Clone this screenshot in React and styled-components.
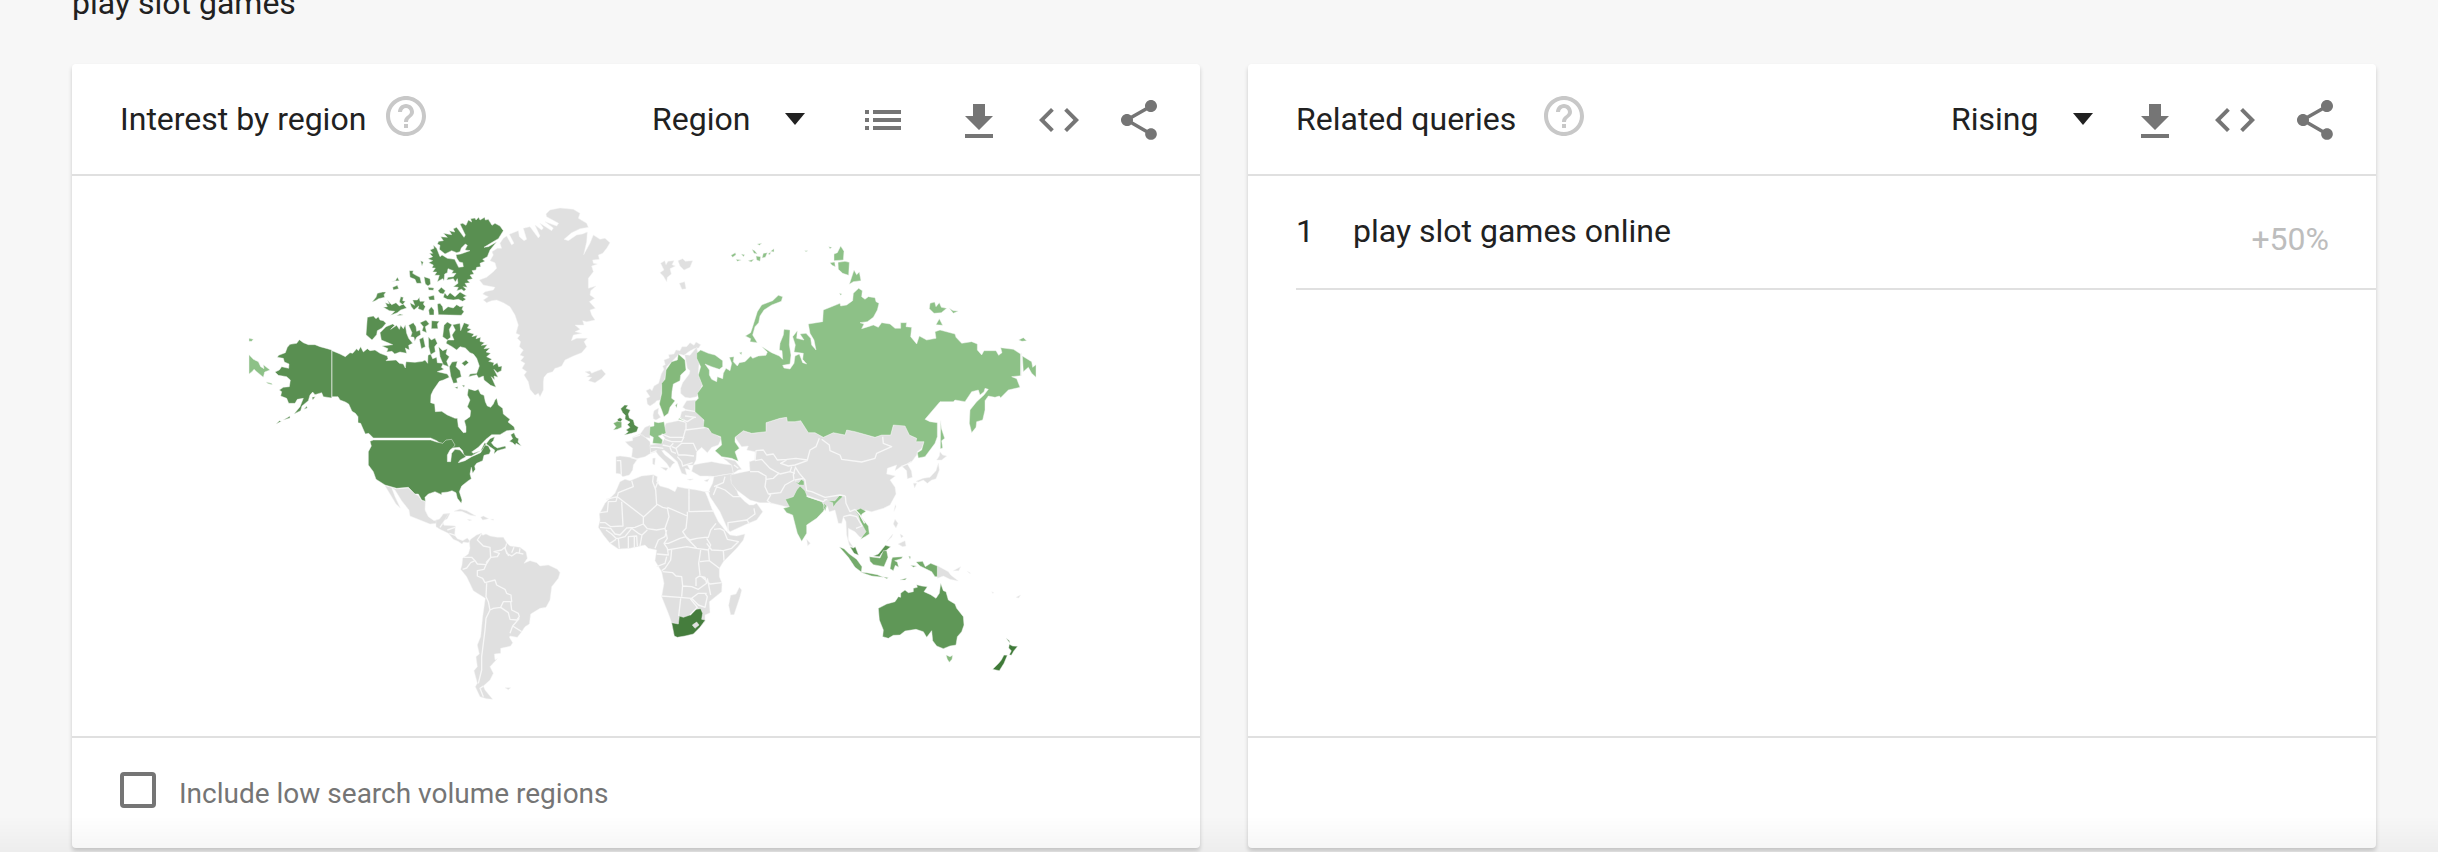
import React from "react";
import styled, { createGlobalStyle } from "styled-components";

const GlobalStyle = createGlobalStyle`
  *, *::before, *::after { box-sizing: border-box; }
  body {
    margin: 0;
    background: #f7f7f7;
    color: #212121;
    font-family: Roboto, "Liberation Sans", sans-serif;
    font-size: 32px;
    line-height: 38px;
    overflow: hidden;
  }
`;

const Page = styled.main`
  margin-top: -16px;
  padding: 0 62px 4px 72px;
`;

const Term = styled.p`
  margin: 0 0 42px;
`;

const Cards = styled.div`
  display: grid;
  grid-template-columns: 1fr 1fr;
  gap: 48px;
`;

const Card = styled.section`
  display: flex;
  flex-direction: column;
  min-width: 0;
  background: #fff;
  border-radius: 4px;
  box-shadow: 0 3px 4px rgba(0, 0, 0, 0.18);
`;

const CardHeader = styled.header`
  display: flex;
  align-items: center;
  min-height: 112px;
  padding: 0 37px 0 48px;
  border-bottom: 2px solid #e0e0e0;
`;

const Title = styled.h2`
  margin: 0;
  font-size: 32px;
  font-weight: 400;
  line-height: 38px;
`;

const Actions = styled.div`
  display: flex;
  align-items: center;
  gap: 32px;
  margin-left: auto;
`;

const IconButton = styled.button`
  display: block;
  width: 48px;
  height: 48px;
  padding: 0;
  margin: ${(p) => p.$margin || "2px 0 0"};
  border: 0;
  background: none;
  color: ${(p) => p.$color || "#757575"};
  cursor: pointer;

  svg {
    display: block;
    width: 48px;
    height: 48px;
    fill: currentColor;
  }
`;

const SelectBox = styled.div`
  position: relative;

  svg {
    position: absolute;
    top: 50%;
    right: 6px;
    width: 20px;
    height: 12px;
    margin-top: -6px;
    fill: #212121;
    pointer-events: none;
  }
`;

const Select = styled.select`
  display: block;
  appearance: none;
  padding: 0 60px 0 0;
  border: 0;
  background: none;
  color: inherit;
  font: inherit;
  cursor: pointer;
`;

const CardBody = styled.div`
  flex: 1;
  min-height: 560px;
`;

const MapFrame = styled.div`
  display: flex;
  justify-content: center;
  padding: 24px 0 28px;

  svg {
    display: block;
    width: 72%;
    max-width: 808px;
    min-width: 320px;
  }
`;

const CardFooter = styled.footer`
  display: flex;
  align-items: center;
  min-height: 112px;
  padding: 0 48px;
  border-top: 2px solid #e0e0e0;
`;

const Checkbox = styled.input`
  appearance: none;
  width: 36px;
  height: 36px;
  margin: 0 23px 6px 0;
  border: 4px solid #757575;
  border-radius: 4px;
  background: #fff;

  &:checked {
    background: #757575;
  }
`;

const CheckLabel = styled.label`
  padding-top: 2px;
  color: #757575;
  font-size: 28px;
  line-height: 34px;
`;

const QueryList = styled.ol`
  margin: 0;
  padding: 0 0 0 48px;
  list-style: none;
`;

const QueryRow = styled.li`
  display: flex;
  align-items: center;
  height: 114px;
  padding: 0 47px 3px 0;
  border-bottom: 2px solid #e0e0e0;
`;

const Rank = styled.span`
  width: 57px;
`;

const QueryLink = styled.a`
  flex: 1;
  color: inherit;
  text-decoration: none;
`;

const Change = styled.span`
  padding-top: 16px;
  color: #bdbdbd;
`;

const BottomShade = styled.div`
  position: fixed;
  right: 0;
  bottom: 0;
  left: 0;
  height: 36px;
  background: linear-gradient(rgba(0, 0, 0, 0), rgba(0, 0, 0, 0.04));
  pointer-events: none;
`;

const HelpIcon = () => (
  <svg viewBox="0 0 24 24" aria-hidden="true">
    <path d="M11 18h2v-2h-2v2zm1-16C6.480 2 2 6.480 2 12s4.480 10 10 10 10-4.480 10-10S17.520 2 12 2zm0 18c-4.410 0-8-3.590-8-8s3.590-8 8-8 8 3.590 8 8-3.590 8-8 8zm0-14c-2.210 0-4 1.790-4 4h2c0-1.100.9-2 2-2s2 .9 2 2c0 2-3 1.750-3 5h2c0-2.250 3-2.500 3-5 0-2.210-1.790-4-4-4z" />
  </svg>
);

const ListIcon = () => (
  <svg viewBox="0 0 24 24" aria-hidden="true">
    <path d="M3 13h2v-2H3v2zm0 4h2v-2H3v2zm0-8h2V7H3v2zm4 4h14v-2H7v2zm0 4h14v-2H7v2zM7 7v2h14V7H7z" />
  </svg>
);

const DownloadIcon = () => (
  <svg viewBox="0 -1 24 24" aria-hidden="true">
    <path d="M19 9h-4V3H9v6H5l7 7 7-7zM5 18v2h14v-2H5z" />
  </svg>
);

const CodeIcon = () => (
  <svg viewBox="0 0 24 24" aria-hidden="true">
    <path d="M9.400 16.600L4.800 12l4.600-4.600L8 6l-6 6 6 6 1.400-1.400zm5.200 0l4.600-4.600-4.600-4.600L16 6l6 6-6 6-1.400-1.400z" />
  </svg>
);

const ShareIcon = () => (
  <svg viewBox="0 0 24 24" aria-hidden="true">
    <path d="M18 16.080c-.76 0-1.440.3-1.960.77L8.910 12.700c.05-.23.09-.46.09-.7s-.04-.47-.09-.7l7.050-4.110c.54.5 1.250.81 2.040.81 1.660 0 3-1.340 3-3s-1.340-3-3-3-3 1.340-3 3c0 .24.04.47.09.7L8.040 9.810C7.500 9.310 6.790 9 6 9c-1.660 0-3 1.340-3 3s1.340 3 3 3c.79 0 1.500-.31 2.040-.81l7.120 4.160c-.05.21-.08.43-.08.65 0 1.610 1.310 2.920 2.920 2.920s2.920-1.310 2.920-2.920-1.310-2.920-2.920-2.920z" />
  </svg>
);

const NONE = "#e0e0e0";
const NA = "#598f51";
const LIGHT = "#8dc187";

/* Each map sheet has its own origin; a shape is [fill, path]. */
const SHEETS = [
  {
    at: [1080, 600],
    shapes: [
      [NONE, "M558 42 570 30 600 24 640 28 660 40 655 55 680 70 685 82 660 86 635 98 612 118 625 122 650 105 668 102 682 96 680 125 671 164 690 130 700 105 720 118 735 115 750 128 740 145 728 160 715 165 718 178 698 180 700 190 712 192 695 198 700 215 685 235 685 265 708 258 692 272 690 285 704 295 688 305 706 325 690 330 695 345 705 360 680 365 668 362 672 375 645 375 660 388 645 395 665 400 640 405 634 422 650 415 682 415 672 425 680 440 665 458 640 468 615 480 605 498 592 503 585 505 578 515 562 520 552 532 550 545 550 570 540 590 535 580 525 586 510 568 505 545 492 525 500 515 486 505 495 490 482 482 492 470 480 465 490 450 478 440 482 425 472 415 480 405 468 400 475 375 465 345 450 320 430 308 410 300 395 302 380 308 370 300 385 290 368 282 375 275 400 270 405 262 370 255 358 240 380 232 400 215 410 205 405 188 390 182 400 165 396 155 412 145 425 145 420 130 430 115 440 108 455 135 462 130 448 103 475 92 478 110 492 122 500 118 490 85 510 80 535 114 540 108 525 75 545 90 550 84 540 70 575 92 580 84 555 65 590 78 596 70 560 50z"],
      [NONE, "M675 515 690 513 695 520 705 515 725 508 737 522 725 535 705 548 685 542 695 532 680 530 690 524z"],
      [NONE, "M75 857 110 867 145 864 165 882 175 887 185 902 196 903 195 930 205 950 222 962 245 958 250 942 270 940 262 956 250 962 248 982 232 970 210 972 180 960 150 948 147 930 125 902 105 870 95 863 105 890 121 924 108 912 95 890z"],
      [NA, "M-84 452-60 462-44 470-30 458-22 460-10 446-5 452 2 440 10 456 22 446 30 452 45 450 60 460 82 468 84 476 78 482 108 480 118 490 130 492 136 504 138 485 165 487 188 484 195 480 203 490 204 466 212 462 218 476 230 472 232 488 250 490 244 502 252 508 232 515 262 522 268 532 250 540 238 544 220 570 213 585 212 608 224 612 226 635 245 634 262 645 285 655 292 655 295 680 310 698 318 697 318 680 313 662 330 650 332 632 322 620 330 600 322 585 325 566 345 572 355 568 362 582 372 586 376 605 382 618 392 622 400 612 405 600 410 595 415 615 428 625 430 642 442 652 450 658 444 666 462 680 465 690 440 692 420 704 395 704 378 718 355 742 335 756 340 760 368 750 378 732 390 716 404 710 400 722 394 728 402 738 412 744 436 738 438 745 412 752 402 762 404 750 392 742 374 728 362 752 334 768 312 768 296 786 290 782 302 772 312 768 308 752 298 742 276 744 262 740 252 732 238 728 230 722 212 714 40 714 26 700 16 702 8 684 2 670-6 668-6 650-14 640-24 634-34 612-44 606-60 600-66 590-84 590z"],
      [NA, "M30 724 40 720 212 720 230 726 248 730 258 720 275 718 285 735 280 742 270 750 262 765 262 785 272 785 275 760 285 748 300 750 310 762 318 770 300 780 295 788 315 782 335 770 362 758 375 735 385 738 392 752 388 762 372 766 368 782 350 790 344 798 346 808 338 820 334 802 330 822 334 836 325 842 305 858 298 875 306 900 304 910 292 895 288 878 276 872 264 876 245 878 245 884 225 875 205 882 195 892 196 904 185 900 175 882 165 882 145 862 110 865 75 855 55 842 48 838 40 815 25 795 25 755 34 738z"],
      [NA, "M430 92 420 78 405 70 396 76 385 58 376 60 374 52 360 60 356 52 348 60 345 54 332 56 335 66 325 60 318 76 308 70 300 72 316 105 312 112 290 82 280 86 284 96 268 92 275 104 250 100 262 112 242 110 250 122 236 124 232 132 240 136 238 148 255 162 275 152 290 158 300 155 304 144 316 132 322 136 315 150 330 152 302 162 288 164 290 174 298 186 308 188 310 200 296 202 284 178 262 175 246 165 240 170 230 145 220 135 222 145 210 150 218 160 208 160 218 170 204 176 218 182 206 188 220 195 216 204 226 204 218 216 230 216 224 226 238 226 232 245 248 236 252 242 254 222 262 218 264 206 280 212 275 220 288 220 280 230 264 232 260 240 280 236 286 246 292 236 294 250 280 260 295 262 290 272 305 268 312 274 318 268 310 260 322 262 315 250 330 248 322 240 338 236 330 225 342 222 336 212 348 210 350 202 362 200 360 190 375 184 368 178 382 170 390 150 410 126 385 140 372 142 398 126 415 116z"],
      [NA, "M250 292 254 278 262 288 270 278 285 290 300 276 320 288 310 292 318 298 308 304 295 298 280 300 262 298zM232 312 240 310 248 320 250 332 264 320 280 324 290 314 300 320 310 318 306 328 312 335 304 346 235 344zM148 212 160 212 158 220 168 226 180 232 184 250 170 250 165 238 150 232zM192 230 210 236 212 252 204 258 196 252zM95 244 106 242 112 232 118 242zM98 262 112 256 116 266 100 270zM36 306 48 292 52 280 68 276 78 276 72 284 74 292 56 296 46 302zM70 322 82 320 76 308 88 312 82 300 95 314 108 308 118 318 130 312 140 324 122 330 112 338 92 346 104 334 88 332zM122 290 130 292 128 302 136 304 128 314 118 306zM154 320 150 308 164 316 158 300 172 300 178 292 180 304 194 304 190 312 196 320 190 332 174 326 176 318 162 330zM206 330 214 320 222 330 222 345 208 345zM205 290 222 286 224 300 208 300zM182 182 190 186 186 198zM204 262 222 264 220 271 206 270zM234 272 244 262 256 272 250 282 240 280zM130 345 120 342 110 347z"],
      [NA, "M22 352 40 348 48 356 55 350 60 360 70 362 78 370 66 384 52 392 50 404 36 420 18 404zM60 398 78 380 98 372 104 376 92 388 110 376 118 388 122 376 130 386 136 374 140 400 146 415 158 430 146 436 148 450 136 444 140 460 120 456 104 462 96 454 80 456 84 446 66 438 98 434 88 430 64 420zM146 376 160 368 168 380 170 394 180 390 182 404 170 412 164 424 162 412 152 410 156 398zM180 368 198 360 208 372 196 380 200 398 186 392 190 380zM178 418 190 412 196 440 184 446zM205 410 214 420 225 414 232 430 224 440 226 455 212 464 206 440zM215 362 238 364 232 372 234 386 214 386zM236 440 248 452 262 446 258 462 268 470 260 484 266 500 250 494 240 470z"],
      [NA, "M252 376 262 366 276 374 268 388 272 412 262 420 248 410zM278 374 300 370 302 392 312 368 328 374 322 384 334 388 322 396 342 402 336 410 352 406 348 416 362 412 360 424 374 428 364 436 382 434 372 446 390 444 378 456 392 460 380 470 396 478 386 484 402 488 400 496 412 488 416 500 426 498 424 512 412 518 402 508 414 532 402 528 404 540 394 530 408 562 392 556 372 540 370 528 356 534 350 524 326 530 330 522 350 520 358 498 350 475 340 462 330 458 316 444 300 440 290 450 276 440 258 430 262 420 282 420 276 405 286 390zM268 500 276 486 292 484 288 500 300 512 304 530 290 536 292 548 280 550 272 528zM305 490 318 480 326 488 314 498zM284 562 294 560 292 566zM306 556 314 556 312 562zM448 724 458 716 452 704 462 698 468 712 476 716 474 726 484 738 468 730 466 736 458 728z"],
    ],
    lines: ["M232 966 238 975 252 972"],
  },
  {
    at: [720, 600],
    shapes: [
      [NA, "M275 450 262 446 240 440 225 434 205 434 190 428 178 419 170 430 150 433 142 442 136 458 116 466 112 472 130 475 133 486 147 492 146 505 125 500 118 510 105 516 115 526 140 530 151 540 148 560 130 562 118 570 125 575 122 588 140 595 146 610 165 610 172 598 190 595 180 620 162 642 182 632 186 618 205 602 210 585 218 576 225 584 245 578 250 590 275 594z"],
      [NA, "M108 672 118 662 124 664zM130 660 150 648 150 654zM192 628 200 618 202 624zM216 592 226 590 218 600z"],
      [LIGHT, "M27 464 40 478 55 485 62 500 72 506 70 494 90 510 74 516 70 532 50 515 42 508 36 515 27 522zM27 415 40 418 35 424 27 424zM78 546 95 550 97 554 84 551z"],
    ],
    lines: [],
  },
  {
    at: [1320, 1410],
    shapes: [
      [NONE, "M-12 150-2 148 10 132 25 132 15 148 8 158 12 166 46 168 44 196 52 206 68 212 82 204 90 214 84 218 70 216 66 222 54 214 40 208 25 190 0 178-12 170z"],
      [NONE, "M42 124 60 117 80 122 108 138 92 136 65 124zM122 142 130 138 146 146 128 150zM152 148 161 148 160 151zM82 148 95 150 88 152zM195 653 212 653 205 659z"],
      [NONE, "M88 215 92 208 110 195 124 190 128 196 138 192 150 198 172 202 190 202 200 218 210 228 240 232 258 245 262 265 252 280 270 272 290 278 300 288 325 285 352 298 360 308 355 325 335 350 330 390 318 412 300 415 272 432 268 462 255 470 245 485 232 502 210 498 208 502 218 518 212 528 182 535 182 550 163 552 165 570 172 566 150 590 160 610 150 630 130 648 135 660 158 688 140 686 120 680 106 650 112 640 102 602 112 590 108 560 118 552 112 525 122 500 128 440 136 385 100 362 80 320 62 298 66 285 68 265 85 252 90 235z"],
      [NONE, "M866 406 872 376 888 372 898 352 905 360 900 380 890 410 882 434 872 434z"],
    ],
    lines: [
      "M124 192 112 210 130 228 150 232 152 262 138 278M70 262 95 262 105 272M68 298 80 294 92 278 105 272 112 282 138 284 152 262 172 260 178 250 162 245 185 240 195 232 200 250 215 258 230 248 250 252M200 220 195 236 206 258M222 232 215 248M240 235 238 248M138 285 132 298 112 302 112 318 128 325 135 338 165 330 170 345 195 358 200 370 213 375 215 395 190 395 182 412 160 415 150 420 145 395 138 380 140 340M182 412 205 428 210 448 230 450 238 440 235 430 215 420 212 395M238 445 218 468 245 485M218 468 210 490M150 420 138 445 135 480 130 520 125 560 125 600 115 640M130 648 120 655 130 680M8 160 0 172M45 172 22 180M28 190 46 196",
    ],
  },
  {
    at: [1770, 990],
    shapes: [
      [NONE, "M105 448 120 452 155 438 190 434 202 440 200 455 210 468 235 475 255 485 262 470 285 475 320 480 345 485 352 500 365 535 385 575 405 600 420 615 440 618 465 612 460 630 440 655 400 695 388 715 388 740 396 760 395 785 358 815 360 848 345 855 345 875 310 912 262 922 252 915 245 878 235 850 215 800 222 760 215 725 195 692 200 660 175 655 165 645 120 655 85 657 60 640 40 615 25 592 30 570 28 552 45 520 75 490 90 455z"],
      [NONE, "M78 380 90 378 120 382 142 388 130 405 128 420 118 435 98 440 92 432 78 430zM106 335 128 332 128 322 148 312 158 315 180 335 182 370 165 380 140 386 125 380 128 355 115 345zM150 313 165 292 180 286 180 325 165 322zM188 385 196 384 194 405 188 402zM212 412 234 414 228 422zM189 255 192 242 206 234 204 250 212 262 198 270 190 266zM292 448 310 447 300 451zM342 452 358 446 352 455z"],
      [NONE, "M180 345 215 340 225 325 215 312 228 280 265 272 288 278 270 265 275 245 290 240 278 232 290 212 318 210 316 240 340 265 345 290 380 315 395 325 385 345 365 352 352 368 335 352 320 365 318 390 310 405 292 405 300 420 285 415 290 435 275 430 262 395 235 370 222 360 215 362 225 375 255 398 248 402 240 415 230 400 205 375 198 365 182 370z"],
      [NONE, "M310 405 335 400 365 395 400 402 425 405 430 430 395 435 370 440 360 438 330 438 305 424zM400 385 435 392 455 418 445 420 430 430 425 405z"],
      [NONE, "M168 182 180 176 186 182 192 168 206 160 214 132 222 118 218 108 226 104 222 90 238 84 236 74 252 72 258 60 270 62 276 50 290 50 300 38 312 46 318 36 332 44 326 54 312 56 298 64 282 76 268 72 245 95 230 110 225 145 215 165 212 210 200 212 195 218 180 228 172 222 170 205 180 200z"],
      [NONE, "M284 74 300 76 320 52 328 90 325 130 337 165 320 200 300 204 285 202 272 190 272 175 278 158 298 132 300 122 292 115z"],
      [NONE, "M372 440 430 430 440 460 440 480 445 495 465 515 478 525 490 525 500 520 518 545 500 570 470 582 420 605 412 595 390 545 360 500 356 486 360 475 368 460z"],
      ["#457d3d", "M245 878 265 882 268 858 280 862 300 855 318 838 332 836 338 850 335 868 346 870 330 892 310 912 285 918 262 922 253 918z"],
      [NONE, "M307 885 320 876 327 885 315 895z"],
      ["#84b97b", "M265 72 285 90 288 120 272 135 270 152 250 162 246 185 245 205 255 212 240 232 235 250 222 260 215 240 208 222 215 190 215 160 225 148 228 120 245 95 262 90zM256 226 262 220 260 234z"],
      [LIGHT, "M192 275 205 278 222 275 228 310 205 318 218 330 215 342 188 340 190 322 178 315 180 290 192 288zM264 268 272 263 282 268 280 272z"],
      ["#558c4d", "M92 236 104 225 114 226 108 235 121 240 115 252 118 264 130 270 134 285 145 292 140 305 125 310 103 315 115 305 108 300 120 292 112 284 120 276 105 268 106 256 98 248zM82 268 90 263 97 268 92 276 84 274z"],
      ["#7db374", "M70 280 82 274 95 276 95 292 82 298 70 300 78 290z"],
    ],
    lines: [
      "M125 452 130 470 85 488 82 500 48 508M82 500 78 514 55 515 52 545 30 548M82 500 160 560 160 582 135 592 110 594 90 615 75 612 62 595 30 592M95 515 99 588 62 590 46 578 30 578M190 436 188 455 197 480 200 525 160 562M205 452 195 478M200 522 218 532 232 535 237 560 225 595 200 600 172 596 160 582M232 532 292 558M297 475 297 545 370 543M292 545 292 558 288 595 278 605 288 620 270 625 235 640 222 640 232 625 225 595M288 620 300 630 320 625 345 622 355 622 362 600 378 580M288 622 320 655 355 660 362 645 350 625M232 660 260 655 290 650 320 655M372 598 390 596 402 602 412 628 445 635 425 655 400 662 365 660 350 640M400 662 402 692M355 660 358 692 388 715M330 695 358 692M245 658 242 690 225 715 215 722M218 725 248 728 258 738 275 740 278 768 305 770 325 778 350 760 345 742 328 738 318 745 318 768M332 660 326 700 330 735M335 740 360 762 395 758M352 745 362 795M213 798 270 802 305 805 325 790 350 790M278 765 275 800M305 805 325 825 345 832 352 800 345 790M272 805 266 858M300 805 322 832 300 855M48 600 65 612 78 625 85 625 88 655M60 640 78 628M115 655 115 620 140 618 142 648M133 655 133 618M150 648 156 615 172 600M85 625 105 620 125 595 145 610 155 615M195 655 205 630 225 620 230 600M200 672 235 675 232 655 222 640M200 710 225 700 230 680",
      "M80 392 92 392 94 434M122 382 142 388M128 322 150 315M215 312 240 322 280 322 286 300 350 292M288 278 288 300M225 328 245 335 275 335 282 320M218 345 240 350 250 340M245 350 258 355 275 340 310 340 320 362M258 355 265 375 285 375 312 378M262 380 275 395 278 408 308 398M240 352 245 365 258 370M182 352 200 352 220 355M288 240 318 245M285 258 318 262M270 265 292 275 312 262M370 495 380 470 405 480 430 500 450 500M405 440 400 458 372 470M428 430 424 450 440 480M414 605 414 578 470 570 495 552 492 535M470 568 478 582M180 370 200 362M345 485 360 485M432 405 445 415M355 440 372 440",
    ],
  },
  {
    at: [2220, 1200],
    shapes: [
      [NONE, "M-15 112 10 92 35 100 78 95 78 68 120 55 140 52 142 65 165 65 182 62 205 98 225 98 250 112 280 98 315 105 320 90 345 95 370 102 405 112 425 105 452 105 460 75 495 75 508 105 530 115 530 125 552 125 545 145 532 155 530 165 515 185 502 192 514 212 517 232 502 236 500 212 485 198 465 212 470 195 442 205 440 222 466 228 450 240 465 262 468 282 450 315 430 325 395 335 375 330 360 345 370 360 385 390 378 410 360 412 345 395 325 385 325 420 340 442 328 436 320 405 318 365 310 350 305 370 295 370 285 330 268 335 262 318 250 330 200 370 180 360 135 330 148 322 130 318 90 308 60 308 30 300 10 285-10 270-26 250-28 225 0 218 30 212 28 185 45 180 45 155 20 150 25 138 5 140z"],
      [NONE, "M600 155 608 165 620 168 605 180 590 180 598 168zM595 190 598 210 588 236 575 240 562 250 550 240 535 246 528 244 550 235 570 232 588 212zM520 250 530 250 524 264zM466 314 468 320 462 334zM465 358 474 370 468 384 460 372zM480 402 490 408 484 414zM474 432 495 422 498 438 488 440zM440 425 458 402 456 410zM200 418 211 430 203 437z"],
      [NONE, "M592 497 625 515 632 525 655 543 630 538 610 528 592 535zM640 512 662 500 656 512zM682 514 692 520 688 520zM755 575 762 578 758 580zM828 592 842 585 836 594z"],
      [LIGHT, "M180 258 195 272 202 290 245 305 256 322 250 334 230 355 200 375 200 400 185 424 172 400 158 345 140 338 130 325 148 320 136 298 160 290 170 270zM165 245 176 248 184 238 192 244 192 256 178 255zM262 302 285 302 300 284 308 290 288 310 280 322 278 308zM252 310 260 318 256 332 250 325z"],
      ["#84bb7c", "M345 332 362 325 378 334 366 342 362 350 385 378 388 402 362 418 368 408 378 395 360 362 355 345z"],
      ["#5c9453", "M330 440 340 444 346 440 356 466 342 460zM400 468 415 462 436 436 452 440 440 450 425 460 418 470z"],
      ["#74ab6b", "M298 441 312 446 328 462 350 478 366 500 364 516 345 502 325 472zM362 517 380 518 412 524 430 532 395 528zM388 470 420 474 430 452 440 452 444 472 432 500 400 494 390 484zM455 478 458 472 488 470 484 476 464 482 472 486 476 502 466 496 460 512 450 506zM430 530 445 533 440 536zM480 540 500 534 496 540zM506 468 512 470 510 478zM512 496 530 498 520 502zM528 486 548 484 556 500 572 490 592 498 592 530 585 530 575 515 560 508 540 498z"],
      ["#5f9757", "M415 625 440 612 465 605 475 590 482 592 482 580 495 570 505 578 520 575 520 565 532 562 530 554 545 558 562 560 552 575 572 584 588 595 598 580 602 550 610 572 618 575 625 600 645 612 650 625 670 650 672 675 665 695 652 710 648 735 630 738 610 746 590 738 578 722 575 692 560 712 550 695 528 688 495 693 480 705 460 706 445 715 428 710 430 690 418 660z"],
      ["#84b97b", "M618 765 630 770 638 766 636 778 628 787 622 778z"],
      ["#3f7a38", "M808 733 818 738 833 739 822 752 814 766 808 764 814 752 806 744zM758 808 776 790 784 780 792 765 802 766 792 790 778 812zM798 714 808 722 810 730z"],
    ],
    lines: [
      "M45 182 48 152 70 150 80 165 100 162 112 180 140 178 168 175 202 180 210 150 228 140 238 115M45 182 65 178 90 205 120 222M140 180 122 190 145 198 165 195 202 182M120 222 150 215 165 220M155 200 150 215M30 215 55 215 78 228 78 238 100 235 118 218M78 238 75 260 85 282 92 285 82 302 95 312M85 282 122 278 135 255 162 240 160 225 165 205M165 200 178 220 195 240 200 272 215 275 255 292 300 285 316 288M245 118 268 135 270 152 300 165 305 178 365 186 405 175 410 160 455 140 430 130 428 110M200 288 250 305 258 298M252 300 262 298M316 288 318 310 330 335 345 328M310 350 330 345 350 350 366 378 348 385M345 328 360 345 374 370M484 200 502 192 515 185M165 240 190 235",
    ],
  },
  {
    at: [2040, 690],
    shapes: [
      [LIGHT, "M50 370 62 360 85 370 105 375 128 392 128 410 118 418 95 410 75 402 88 420 88 435 95 448 110 455 112 440 128 446 130 430 138 415 150 422 155 400 148 382 162 380 160 395 172 408 178 398 195 395 212 378 218 385 235 378 258 376 262 366 245 350 275 368 298 378 308 388 306 362 298 360 300 340 310 315 312 298 330 300 328 345 333 375 330 402 308 406 312 414 330 417 342 400 345 378 358 372 368 398 380 402 368 388 370 370 342 366 346 345 338 320 352 302 350 325 372 330 360 312 378 310 392 325 395 345 408 360 402 330 390 310 385 282 428 275 430 240 460 228 480 220 482 228 500 225 518 212 520 190 536 175 547 182 545 200 555 208 565 200 585 203 588 215 597 220 592 240 580 262 562 275 540 278 552 282 545 296 565 290 580 285 595 292 605 278 630 282 645 295 662 295 662 278 680 278 678 290 695 292 692 320 710 342 718 318 740 330 768 325 765 305 780 300 825 312 828 322 845 340 875 335 892 342 892 360 905 375 912 362 925 362 948 362 956 376 966 368 962 353 1000 358 1022 372 1022 437 995 440 1010 446 1020 472 985 480 962 503 958 498 945 502 925 498 915 512 915 540 908 570 890 575 888 592 875 608 868 580 870 540 890 515 912 495 925 478 915 475 912 485 900 495 895 480 875 485 855 515 825 510 820 515 780 515 735 568 750 575 772 578 772 620 765 640 735 680 715 684 712 668 725 660 732 635 708 635 710 625 688 615 675 588 640 585 632 615 605 615 585 622 550 612 525 605 500 600 495 615 460 608 430 622 405 608 385 608 362 572 345 575 322 575 320 562 300 565 258 578 258 605 215 610 190 602 165 622 165 636 178 655 165 665 175 694 155 685 125 680 105 662 125 645 122 620 95 610 85 595 70 590 72 570 45 545 45 515 55 505 52 490 68 468 55 435 62 410 50 385z"],
      [LIGHT, "M1027 378 1055 395 1058 412 1068 404 1068 442 1055 430 1045 412 1030 425zM308 200 295 196 278 212 245 225 232 245 218 290 212 308 196 318 212 326 210 335 232 338 218 315 225 290 236 278 240 258 252 240 275 225 304 214zM462 92 462 72 472 68 482 48 492 64 490 90zM474 97 495 94 508 97 506 136 488 130 475 118zM450 98 464 96 466 110 456 106zM508 163 522 120 530 134 538 126 543 152 520 155zM748 236 750 220 764 216 768 230 778 218 784 232 800 235 784 248 762 250zM808 235 820 242 835 243 820 250zM768 284 778 266 788 286zM1016 330 1030 323 1040 332 1026 334zM782 572 784 595 794 625 785 632 788 654 781 656zM178 368 186 366 184 374zM478 190 486 192 482 196zM446 50 456 52 450 56zM374 62 384 62 378 65z"],
      [LIGHT, "M153 76 166 68 168 74 158 82zM168 88 184 90 172 94zM184 72 194 74 190 80zM216 58 224 62 232 72 222 70zM246 84 250 70 262 68 256 82zM264 72 272 66 270 74zM272 64 282 56 282 66zM204 92 222 88 214 96zM228 78 242 80 240 94 230 90zM232 42 246 40 238 46z"],
      [NONE, "M-58 100-46 92-42 104-36 94-18 92-24 104-14 108-30 116-26 132-38 142-40 155-50 138-60 128-48 120zM-6 92 8 86 16 94 38 92 30 112 12 120 0 108zM-2 160 14 155 18 176 6 178z"],
    ],
    lines: ["M1024 368 1024 438"],
  },
];

const Shape = styled.path`
  fill: ${(p) => p.$fill};
  stroke: #f5f5f5;
  stroke-width: 2;
  stroke-opacity: 0.7;
  stroke-linejoin: round;
`;

const Border = styled.path`
  fill: none;
  stroke: #f7f7f7;
  stroke-width: 4;
  stroke-linejoin: round;
`;

const WorldMap = () => (
  <svg viewBox="696 600 2424 1524" role="img" aria-label="World map">
    {SHEETS.map(({ at, shapes, lines }) => (
      <g key={at.join()} transform={`translate(${at[0]} ${at[1]})`}>
        {shapes.map(([fill, d]) => (
          <Shape key={d} $fill={fill} d={d} />
        ))}
        {lines.map((d) => (
          <Border key={d} d={d} />
        ))}
      </g>
    ))}
  </svg>
);

const Dropdown = ({ label, value }) => (
  <SelectBox>
    <Select aria-label={label} defaultValue={value}>
      <option value={value}>{value}</option>
    </Select>
    <svg viewBox="0 0 20 12" aria-hidden="true">
      <path d="M0 0h20L10 12z" />
    </svg>
  </SelectBox>
);

const ShareActions = () => (
  <>
    <IconButton type="button" aria-label="Download">
      <DownloadIcon />
    </IconButton>
    <IconButton type="button" aria-label="Embed">
      <CodeIcon />
    </IconButton>
    <IconButton type="button" aria-label="Share">
      <ShareIcon />
    </IconButton>
  </>
);

const QUERIES = [{ rank: 1, text: "play slot games online", change: "+50%" }];

export default function App() {
  return (
    <>
      <GlobalStyle />
      <Page>
        <Term>play slot games</Term>
        <Cards>
          <Card>
            <CardHeader>
              <Title>Interest by region</Title>
              <IconButton type="button" aria-label="Help" $color="#c8c8c8" $margin="0 0 6px 16px">
                <HelpIcon />
              </IconButton>
              <Actions>
                <Dropdown label="Resolution" value="Region" />
                <IconButton type="button" aria-label="List view" $margin="2px 16px 0">
                  <ListIcon />
                </IconButton>
                <ShareActions />
              </Actions>
            </CardHeader>
            <CardBody>
              <MapFrame>
                <WorldMap />
              </MapFrame>
            </CardBody>
            <CardFooter>
              <Checkbox type="checkbox" id="low-volume" />
              <CheckLabel htmlFor="low-volume">Include low search volume regions</CheckLabel>
            </CardFooter>
          </Card>
          <Card>
            <CardHeader>
              <Title>Related queries</Title>
              <IconButton type="button" aria-label="Help" $color="#c8c8c8" $margin="0 0 6px 24px">
                <HelpIcon />
              </IconButton>
              <Actions>
                <Dropdown label="Sort" value="Rising" />
                <ShareActions />
              </Actions>
            </CardHeader>
            <CardBody>
              <QueryList>
                {QUERIES.map((q) => (
                  <QueryRow key={q.rank}>
                    <Rank>{q.rank}</Rank>
                    <QueryLink href="#">{q.text}</QueryLink>
                    <Change>{q.change}</Change>
                  </QueryRow>
                ))}
              </QueryList>
            </CardBody>
            <CardFooter />
          </Card>
        </Cards>
      </Page>
      <BottomShade />
    </>
  );
}
